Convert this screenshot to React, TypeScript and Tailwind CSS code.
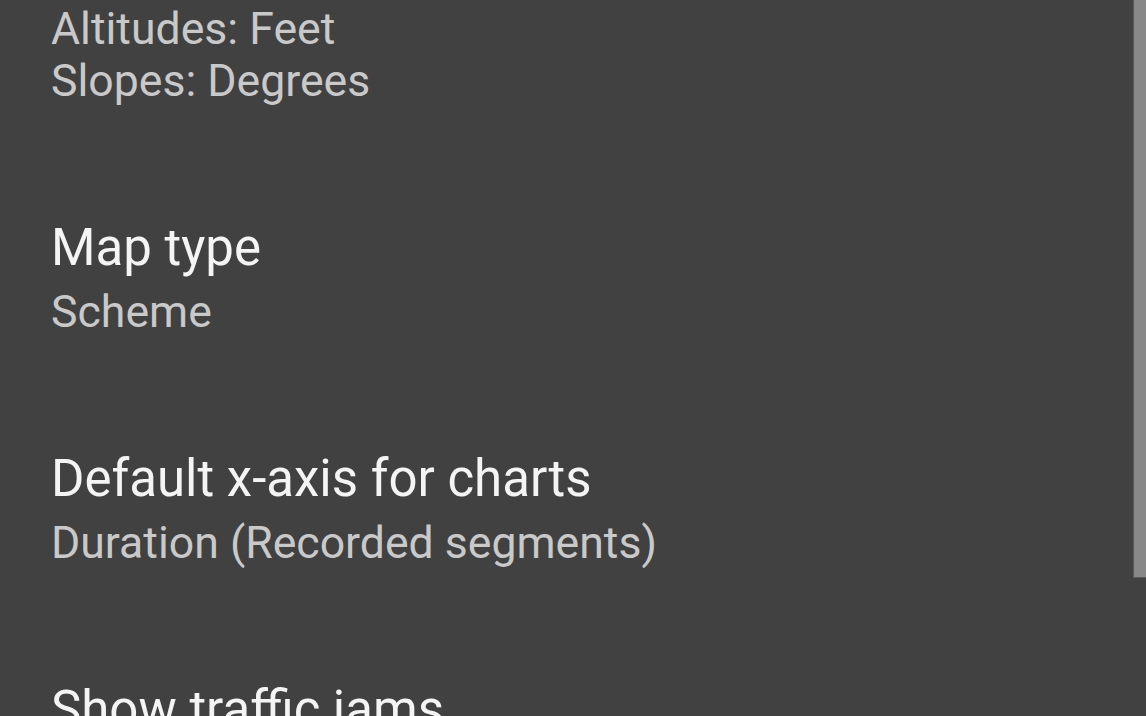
import React from "react";

interface PrefItem {
  title?: string;
  summary: string[];
}

const items: PrefItem[] = [
  { summary: ["Altitudes: Feet", "Slopes: Degrees"] },
  { title: "Map type", summary: ["Scheme"] },
  { title: "Default x-axis for charts", summary: ["Duration (Recorded segments)"] },
  { title: "Show traffic jams", summary: ["Off"] },
];

function PrefRow({ item, first }: { item: PrefItem; first: boolean }) {
  return (
    <div className={`pl-[51px] pr-16 ${first ? "pt-[3px]" : "pt-[56px]"} pb-[55px] flex flex-col`}>
      {item.title && (
        <div className="text-[51px] leading-[60px] text-[#f4f4f4] mb-[8px] whitespace-nowrap">{item.title}</div>
      )}
      {item.summary.map((line) => (
        <div key={line} className="text-[44.6px] leading-[52px] text-[#c9c9c9] whitespace-nowrap">
          {line}
        </div>
      ))}
    </div>
  );
}

export default function App() {
  return (
    <div
      className="relative w-[1146px] h-[716px] overflow-hidden bg-[#414141]"
      style={{ fontFamily: "Roboto, 'Noto Sans', sans-serif" }}
    >
      <div className="flex flex-col">
        {items.map((item, i) => (
          <PrefRow key={i} item={item} first={i === 0} />
        ))}
      </div>

      {/* overlay scrollbar thumb */}
      <div className="absolute top-0 right-0 w-[13px] h-[578px] bg-[#888888] border-l border-b border-[#5a5a5a]" />
    </div>
  );
}
